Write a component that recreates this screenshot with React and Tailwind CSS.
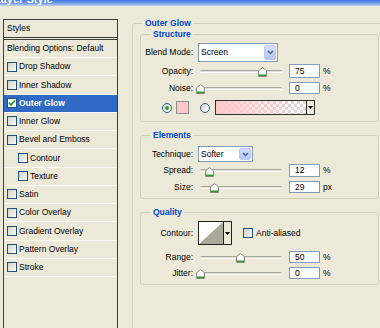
import React from "react"

const font = "font-['Tahoma','Liberation_Sans',sans-serif] text-[8.5px] text-black"

function Check({ checked }) {
  return (
    <span className={"w-[10px] h-[10px] shrink-0 border border-[#1c5180] flex items-center justify-center " + (checked ? "bg-white" : "bg-gradient-to-br from-[#d2d1c8] to-[#fbfbf8]")}>
      {checked && (
        <svg width="8" height="8" viewBox="0 0 8 8">
          <path d="M1 4 L3 6 L7 1.5" fill="none" stroke="#21a121" strokeWidth="1.8" />
        </svg>
      )}
    </span>
  )
}

function Radio({ on }) {
  return (
    <span className="w-[10px] h-[10px] shrink-0 rounded-full border border-[#2f5a8f] bg-gradient-to-br from-[#d6d5cd] to-white flex items-center justify-center">
      {on && <span className="w-[4px] h-[4px] rounded-full bg-[#2aa52a]" />}
    </span>
  )
}

function Row({ label, checked, indent, selected }) {
  return (
    <div className={"h-[18.25px] border-b border-[#fbfaf4] flex items-center " + (indent ? "pl-[14px] " : "pl-[3px] ") + (selected ? "bg-[#316ac5] text-white font-bold" : "")}>
      <Check checked={checked} />
      <span className="ml-[2px]">{label}</span>
    </div>
  )
}

function Thumb({ pos }) {
  return (
    <svg className={"absolute top-[calc(50%-4px)] " + pos} width="9" height="10" viewBox="0 0 9 10">
      <path d="M0.5 3.8 L4.5 0.5 L8.5 3.8 L8.5 9.5 L0.5 9.5 Z" fill="#fff" stroke="#8a8a84" />
      <rect x="1" y="7.5" width="7" height="1.6" fill="#21a121" />
    </svg>
  )
}

function Label({ children }) {
  return <span className="w-[52px] shrink-0 text-right">{children}</span>
}

function SliderRow({ label, value, unit, pos, h }) {
  return (
    <div className={"flex items-center " + h}>
      <Label>{label}</Label>
      <div className="relative ml-[7px] w-[82px] h-full flex items-center">
        <div className="w-full h-[3px] rounded-full bg-[#e4e2d8] border-t border-[#a9a79d] border-b border-b-white" />
        <Thumb pos={pos} />
      </div>
      <div className="ml-[7px] w-[31px] h-full border border-[#7f9db9] bg-white pl-[5px] flex items-center">{value}</div>
      <span className="ml-[3px]">{unit}</span>
    </div>
  )
}

function Select({ value, w }) {
  return (
    <div className={"ml-[5px] h-full border border-[#7f9db9] bg-white flex items-center justify-between pl-[2px] pr-px " + w}>
      <span>{value}</span>
      <span className="w-[12px] h-[calc(100%-2px)] rounded-[2px] bg-gradient-to-b from-[#d2defc] to-[#b2c7f5] border border-[#b9cbf4] flex items-center justify-center">
        <svg width="7" height="5" viewBox="0 0 7 5">
          <path d="M1 1 L3.5 3.5 L6 1" fill="none" stroke="#4d6185" strokeWidth="1.5" />
        </svg>
      </span>
    </div>
  )
}

function Arrow() {
  return (
    <svg width="5" height="3" viewBox="0 0 5 3">
      <path d="M0 0 H5 L2.5 3 Z" fill="#000" />
    </svg>
  )
}

export default function App() {
  const legend = "font-bold text-[#0046d5] leading-[11px] px-[2px]"
  return (
    <div className={"w-[380px] h-[328px] overflow-hidden bg-[#ece9d8] flex flex-col " + font}>
      <div className="h-[6px] shrink-0 overflow-hidden bg-[linear-gradient(#3d78e3,#7ea3ea_60%,#c8d6ee)]">
        <div className="-mt-[6px] -ml-[6px] text-[11px] leading-[11px] font-bold text-white">Layer Style</div>
      </div>

      <div className="flex items-start">
        {/* styles list */}
        <div className="ml-[3px] mt-[13px] w-[115px] h-[320px] shrink-0 border border-[#3d3d3a]">
          <div className="h-[18px] border-b border-[#3d3d3a] flex items-center pl-[3px]">Styles</div>
          <div className="h-px" />
          <div className="border-t border-[#3d3d3a]">
            <div className="h-[18px] border-b border-[#fbfaf4] flex items-center pl-[3px]">Blending Options: Default</div>
            <Row label="Drop Shadow" />
            <Row label="Inner Shadow" />
            <Row label="Outer Glow" checked selected />
            <Row label="Inner Glow" />
            <Row label="Bevel and Emboss" />
            <Row label="Contour" indent />
            <Row label="Texture" indent />
            <Row label="Satin" />
            <Row label="Color Overlay" />
            <Row label="Gradient Overlay" />
            <Row label="Pattern Overlay" />
            <Row label="Stroke" />
          </div>
        </div>

        {/* settings */}
        <fieldset className="ml-[14px] mt-[12px] w-[254px] h-[330px] shrink-0 border border-[#d0d0bf] rounded-[3px] pl-[7px]">
          <legend className={"ml-[3px] " + legend}>Outer Glow</legend>

          <fieldset className="w-[239px] border border-[#d0d0bf] rounded-[3px] pb-[6px]">
            <legend className={"ml-[10px] " + legend}>Structure</legend>
            <div className="mt-[3px] h-[19px] flex items-center">
              <Label>Blend Mode:</Label>
              <Select value="Screen" w="w-[80px]" />
            </div>
            <div className="mt-[2px]">
              <SliderRow label="Opacity:" value="75" unit="%" pos="left-[58px]" h="h-[14px]" />
            </div>
            <div className="mt-[4px]">
              <SliderRow label="Noise:" value="0" unit="%" pos="left-[-4px]" h="h-[12px]" />
            </div>
            <div className="mt-[6px] h-[15px] flex items-center pl-[21px]">
              <Radio on />
              <span className="ml-[4px] w-[13px] h-[13px] border border-[#8e8f8f] bg-[#ffc8c8]" />
              <span className="ml-[11px]"><Radio /></span>
              <div className="ml-[5px] w-[100px] h-[15px] border border-[#2f2f2f] flex">
                <div className="flex-1 bg-[conic-gradient(#d9d9d9_25%,#fff_0_50%,#d9d9d9_0_75%,#fff_0)] bg-[length:6px_6px]">
                  <div className="w-full h-full bg-gradient-to-r from-[#ffc8c8] to-transparent" />
                </div>
                <div className="w-[8px] border-l border-[#2f2f2f] bg-[#ece9d8] flex items-center justify-center">
                  <Arrow />
                </div>
              </div>
            </div>
          </fieldset>

          <fieldset className="mt-[8px] w-[239px] border border-[#d0d0bf] rounded-[3px] pb-[5px]">
            <legend className={"ml-[10px] " + legend}>Elements</legend>
            <div className="mt-[5px] h-[16px] flex items-center">
              <Label>Technique:</Label>
              <Select value="Softer" w="w-[55px]" />
            </div>
            <div className="mt-[2px]">
              <SliderRow label="Spread:" value="12" unit="%" pos="left-[5px]" h="h-[13px]" />
            </div>
            <div className="mt-[4px]">
              <SliderRow label="Size:" value="29" unit="px" pos="left-[10px]" h="h-[12px]" />
            </div>
          </fieldset>

          <fieldset className="mt-[8px] w-[239px] border border-[#d0d0bf] rounded-[3px] pb-[5px]">
            <legend className={"ml-[10px] " + legend}>Quality</legend>
            <div className="mt-[3px] h-[24px] flex items-center">
              <Label>Contour:</Label>
              <div className="ml-[5px] w-[34px] h-full border border-[#222] flex">
                <svg className="flex-1" viewBox="0 0 25 22" preserveAspectRatio="none">
                  <rect width="25" height="22" fill="#fff" />
                  <path d="M0 22 L25 0 L25 22 Z" fill="#aca899" />
                </svg>
                <div className="w-[8px] border-l border-[#222] bg-[#ece9d8] flex items-center justify-center">
                  <Arrow />
                </div>
              </div>
              <span className="ml-[11px]"><Check /></span>
              <span className="ml-[3px]">Anti-aliased</span>
            </div>
            <div className="mt-[6px]">
              <SliderRow label="Range:" value="50" unit="%" pos="left-[36px]" h="h-[12px]" />
            </div>
            <div className="mt-[4px]">
              <SliderRow label="Jitter:" value="0" unit="%" pos="left-[-4px]" h="h-[12px]" />
            </div>
          </fieldset>
        </fieldset>
      </div>
    </div>
  )
}
